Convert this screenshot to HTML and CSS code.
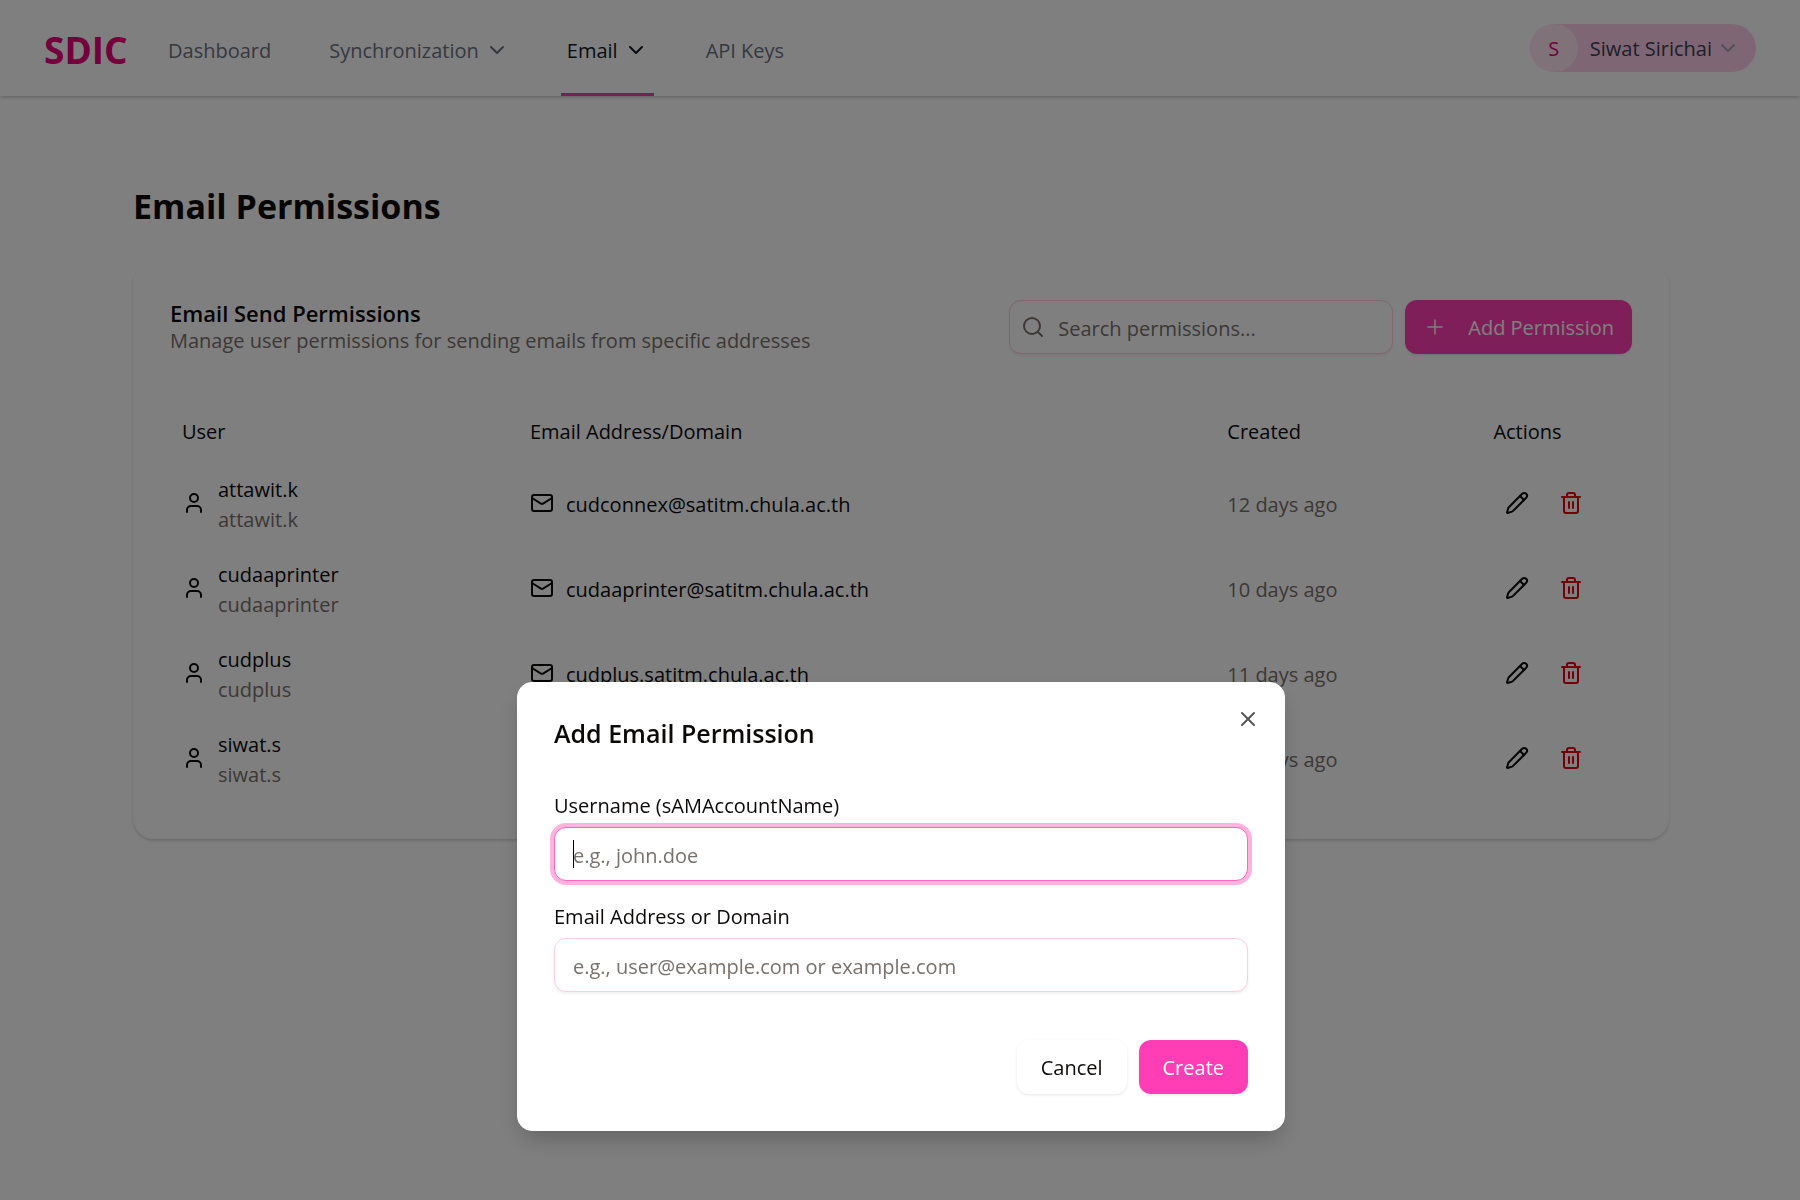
FILE: index.html
```html
<!DOCTYPE html>
<html lang="en">
<head>
<meta charset="utf-8">
<meta name="viewport" content="width=device-width, initial-scale=1">
<title>Email Permissions</title>
<link rel="stylesheet" href="styles.css">
</head>
<body>
<svg class="sprite" aria-hidden="true">
  <symbol id="chevron" viewBox="0 0 24 24"><path d="m6 9 6 6 6-6"/></symbol>
  <symbol id="user" viewBox="0 0 24 24"><path d="M19 21v-2a4 4 0 0 0-4-4H9a4 4 0 0 0-4 4v2"/><circle cx="12" cy="7" r="4"/></symbol>
  <symbol id="mail" viewBox="0 0 24 24"><rect width="20" height="16" x="2" y="4" rx="2"/><path d="m22 7-8.97 5.7a1.94 1.94 0 0 1-2.06 0L2 7"/></symbol>
  <symbol id="pencil" viewBox="0 0 24 24"><path d="M21.174 6.812a1 1 0 0 0-3.986-3.987L3.842 16.174a2 2 0 0 0-.5.83l-1.321 4.352a.5.5 0 0 0 .623.622l4.353-1.32a2 2 0 0 0 .83-.497z"/><path d="m15 5 4 4"/></symbol>
  <symbol id="trash" viewBox="0 0 24 24"><path d="M3 6h18"/><path d="M19 6v14a2 2 0 0 1-2 2H7a2 2 0 0 1-2-2V6"/><path d="M8 6V4a2 2 0 0 1 2-2h4a2 2 0 0 1 2 2v2"/><path d="M10 11v6"/><path d="M14 11v6"/></symbol>
  <symbol id="search" viewBox="0 0 24 24"><circle cx="11" cy="11" r="8"/><path d="m21 21-4.300-4.300"/></symbol>
  <symbol id="plus" viewBox="0 0 24 24"><path d="M5 12h14"/><path d="M12 5v14"/></symbol>
  <symbol id="close" viewBox="0 0 24 24"><path d="M18 6 6 18"/><path d="m6 6 12 12"/></symbol>
</svg>

<header class="topbar">
  <a class="brand" href="#">SDIC</a>
  <nav class="nav">
    <a class="nav__item" href="#"><span class="label">Dashboard</span></a>
    <button class="nav__item" type="button"><span class="label">Synchronization</span><svg class="icon"><use href="#chevron"/></svg></button>
    <button class="nav__item nav__item--active" type="button"><span class="label">Email</span><svg class="icon"><use href="#chevron"/></svg></button>
    <a class="nav__item" href="#"><span class="label">API Keys</span></a>
  </nav>
  <button class="account" type="button">
    <span class="account__avatar label">S</span>
    <span class="label">Siwat Sirichai</span>
    <svg class="icon account__chevron"><use href="#chevron"/></svg>
  </button>
</header>

<main class="page">
  <h1 class="page__title">Email Permissions</h1>
  <section class="card">
    <div class="card__header">
      <div>
        <h2 class="card__title">Email Send Permissions</h2>
        <p class="card__text">Manage user permissions for sending emails from specific addresses</p>
      </div>
      <div class="tools">
        <div class="search">
          <svg class="icon search__icon"><use href="#search"/></svg>
          <input class="input search__input" type="search" placeholder="Search permissions..." aria-label="Search permissions">
        </div>
        <button class="button button--primary button--add" type="button"><svg class="icon icon--thin"><use href="#plus"/></svg><span class="label">Add Permission</span></button>
      </div>
    </div>
    <table class="table">
      <colgroup><col class="col-user"><col class="col-email"><col class="col-created"><col class="col-actions"></colgroup>
      <thead>
        <tr><th scope="col">User</th><th scope="col">Email Address/Domain</th><th scope="col">Created</th><th scope="col">Actions</th></tr>
      </thead>
      <tbody>
        <tr>
          <td><div class="cell"><svg class="icon"><use href="#user"/></svg><div><div>attawit.k</div><div class="muted">attawit.k</div></div></div></td>
          <td><div class="cell"><svg class="icon"><use href="#mail"/></svg><span>cudconnex@satitm.chula.ac.th</span></div></td>
          <td class="muted">12 days ago</td>
          <td><div class="actions"><button class="action" type="button" aria-label="Edit"><svg class="icon"><use href="#pencil"/></svg></button><button class="action action--danger" type="button" aria-label="Delete"><svg class="icon"><use href="#trash"/></svg></button></div></td>
        </tr>
        <tr>
          <td><div class="cell"><svg class="icon"><use href="#user"/></svg><div><div>cudaaprinter</div><div class="muted">cudaaprinter</div></div></div></td>
          <td><div class="cell"><svg class="icon"><use href="#mail"/></svg><span>cudaaprinter@satitm.chula.ac.th</span></div></td>
          <td class="muted">10 days ago</td>
          <td><div class="actions"><button class="action" type="button" aria-label="Edit"><svg class="icon"><use href="#pencil"/></svg></button><button class="action action--danger" type="button" aria-label="Delete"><svg class="icon"><use href="#trash"/></svg></button></div></td>
        </tr>
        <tr>
          <td><div class="cell"><svg class="icon"><use href="#user"/></svg><div><div>cudplus</div><div class="muted">cudplus</div></div></div></td>
          <td><div class="cell"><svg class="icon"><use href="#mail"/></svg><span>cudplus.satitm.chula.ac.th</span></div></td>
          <td class="muted">11 days ago</td>
          <td><div class="actions"><button class="action" type="button" aria-label="Edit"><svg class="icon"><use href="#pencil"/></svg></button><button class="action action--danger" type="button" aria-label="Delete"><svg class="icon"><use href="#trash"/></svg></button></div></td>
        </tr>
        <tr>
          <td><div class="cell"><svg class="icon"><use href="#user"/></svg><div><div>siwat.s</div><div class="muted">siwat.s</div></div></div></td>
          <td></td>
          <td class="muted">12 days ago</td>
          <td><div class="actions"><button class="action" type="button" aria-label="Edit"><svg class="icon"><use href="#pencil"/></svg></button><button class="action action--danger" type="button" aria-label="Delete"><svg class="icon"><use href="#trash"/></svg></button></div></td>
        </tr>
      </tbody>
    </table>
  </section>
</main>

<div class="overlay">
  <form class="dialog" role="dialog" aria-modal="true" aria-labelledby="dialog-title">
    <button class="dialog__close" type="button" aria-label="Close"><svg class="icon"><use href="#close"/></svg></button>
    <h2 class="dialog__title" id="dialog-title">Add Email Permission</h2>
    <div class="field">
      <label for="username">Username (sAMAccountName)</label>
      <input class="input" id="username" type="text" placeholder="e.g., john.doe" autofocus>
    </div>
    <div class="field">
      <label for="address">Email Address or Domain</label>
      <input class="input" id="address" type="text" placeholder="e.g., user@example.com or example.com">
    </div>
    <div class="dialog__footer">
      <button class="button" type="button"><span class="label">Cancel</span></button>
      <button class="button button--primary" type="submit"><span class="label">Create</span></button>
    </div>
  </form>
</div>
</body>
</html>
```
FILE: styles.css
```css
* { box-sizing: border-box; }

body {
  margin: 0;
  min-height: 100vh;
  background: #fff;
  color: #0c0a09;
  font: 20px/30px "Segoe UI", "Open Sans", "Noto Sans", sans-serif;
}

h1, h2, p { margin: 0; }
a { color: inherit; text-decoration: none; }
button { margin: 0; padding: 0; border: 0; background: none; color: inherit; font: inherit; cursor: pointer; }

.sprite { display: none; }

.icon {
  flex: none;
  width: 24px;
  height: 24px;
  fill: none;
  stroke: currentColor;
  stroke-width: 2;
  stroke-linecap: round;
  stroke-linejoin: round;
}
.icon--thin { stroke-width: 1.5; }

.label { padding-top: 2px; }
.muted { color: #78716c; }

/* Top bar */
.topbar {
  display: flex;
  align-items: center;
  height: 96px;
  padding: 0 44px;
  box-shadow: 0 1px 4px rgba(0, 0, 0, .25);
}
.brand { width: 118px; padding-top: 3px; color: #e6007a; font-size: 37px; font-weight: 700; line-height: 48px; }
.nav { display: flex; align-self: stretch; gap: 46px; }
.nav__item {
  display: flex;
  align-items: center;
  gap: 6px;
  padding: 6px 6px 0;
  border-bottom: 3px solid transparent;
  color: #6b7280;
}
.nav__item--active { border-color: #f93ba8; color: #111827; }
.account {
  display: flex;
  align-items: center;
  height: 48px;
  margin-left: auto;
  padding-right: 16px;
  border-radius: 24px;
  background: #ffcce8;
  color: #374151;
}
.account__avatar {
  width: 48px;
  height: 48px;
  margin-right: 12px;
  border-radius: 50%;
  background: #ffe6f2;
  color: #e6007a;
  line-height: 46px;
  text-align: center;
}
.account__chevron { margin-left: 4px; color: #9ca3af; }

/* Page */
.page { max-width: 1586px; margin: 0 auto; padding: 83px 24px 83px 26px; }
.page__title { font-size: 34px; font-weight: 700; line-height: 54px; }
.card {
  margin-top: 30px;
  padding: 36px;
  border: 1px solid #fcfcfc;
  border-radius: 21px;
  box-shadow: 0 2px 3px rgba(0, 0, 0, .15);
}
.card__header { display: flex; justify-content: space-between; margin-bottom: 48px; }
.card__title { font-size: 22px; font-weight: 600; line-height: 27px; }
.card__text { color: #78716c; line-height: 27px; }
.tools { display: flex; gap: 12px; }

.input {
  width: 100%;
  height: 54px;
  padding: 2px 18px 0;
  border: 1px solid #ffcce0;
  border-radius: 12px;
  outline: 0;
  background: #fff;
  box-shadow: 0 2px 3px rgba(0, 0, 0, .06);
  color: inherit;
  font: inherit;
}
.input::placeholder { color: #78716c; opacity: 1; }
/* Steady, non-blinking insertion bar while the field is empty */
.input:placeholder-shown:focus {
  caret-color: transparent;
  background: linear-gradient(#000, #000) 18px 50% / 1px 28px no-repeat #fff;
}
.input:focus { border-color: #ff66bd; box-shadow: 0 0 0 4px #ffb3de; }

.search { position: relative; width: 384px; }
.search__icon { position: absolute; top: 15px; left: 12px; color: #78716c; }
.search__input { padding-left: 48px; }

.button {
  display: flex;
  align-items: center;
  justify-content: center;
  height: 54px;
  padding: 0 24px;
  border-radius: 12px;
  box-shadow: 0 1px 3px rgba(0, 0, 0, .1);
}
.button--primary { background: #ff3eb5; color: #fff; }
.button--add { gap: 21px; padding: 0 18px; }

/* Table */
.table { width: 100%; border-collapse: collapse; table-layout: fixed; }
.col-user { width: 23.8%; }
.col-email { width: 47.7%; }
.col-created { width: 18.2%; }
.col-actions { width: 10.3%; }
.table th { height: 60px; padding: 0 12px; font-weight: 400; text-align: left; }
.table td { height: 85px; padding: 0 12px; }
.cell { display: flex; align-items: center; gap: 12px; }
.cell .icon, .action .icon { margin-bottom: 3px; }
.actions { display: flex; gap: 6px; }
.action { display: flex; align-items: center; justify-content: center; width: 48px; height: 48px; }
.action--danger { color: #e7000b; }

/* Dialog */
.overlay {
  position: fixed;
  inset: 0;
  display: flex;
  align-items: flex-start;
  justify-content: center;
  padding: 682px 16px 0 18px;
  background: rgba(0, 0, 0, .5);
}
.dialog {
  position: relative;
  width: 100%;
  max-width: 768px;
  padding: 36px;
  border: 1px solid #fff;
  border-radius: 15px;
  background: #fff;
  box-shadow: 0 12px 24px -6px rgba(0, 0, 0, .25);
}
.dialog__close { position: absolute; top: 24px; right: 24px; display: flex; color: #555; }
.dialog__title { margin-bottom: 44px; font-size: 25px; font-weight: 600; line-height: 28px; }
.field { display: grid; gap: 6px; margin-bottom: 21px; }
.dialog__footer { display: flex; justify-content: flex-end; gap: 12px; margin-top: 48px; }
```
